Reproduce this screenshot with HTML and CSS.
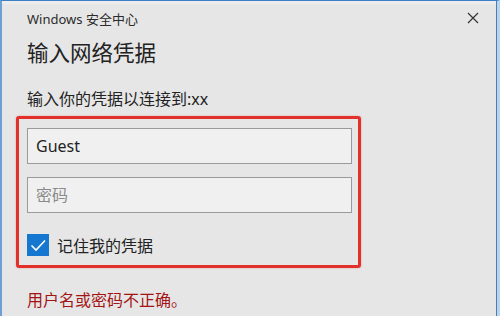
FILE: index.html
```html
<!DOCTYPE html>
<html lang="zh-CN">
<head>
    <meta charset="UTF-8">
    <title>Windows 安全中心</title>
    <link rel="stylesheet" href="styles.css">
</head>
<body>
<div class="dialog">
    <div class="titlebar">
        <span class="app-name">Windows 安全中心</span>
        <span class="close">
            <svg width="12" height="12" viewBox="0 0 12 12"><path d="M1 1 L11 11 M11 1 L1 11" stroke="#333" stroke-width="1.2" fill="none"/></svg>
        </span>
    </div>
    <h1>输入网络凭据</h1>
    <p class="prompt">输入你的凭据以连接到:xx</p>
    <div class="highlight">
        <div class="field">Guest</div>
        <div class="field placeholder">密码</div>
        <div class="remember">
            <span class="checkbox">
                <svg width="22" height="22" viewBox="0 0 22 22"><path d="M4.5 11.5 L9 16 L18 6.5" stroke="#fff" stroke-width="1.6" fill="none"/></svg>
            </span>
            <span>记住我的凭据</span>
        </div>
    </div>
    <p class="error">用户名或密码不正确。</p>
</div>
</body>
</html>
```

FILE: styles.css
```css
body {
    margin: 0;
    font-family: "Noto Sans", "Noto Sans CJK SC", sans-serif;
    background-color: #e6e6e6;
}
.dialog {
    width: 500px;
    height: 316px;
    box-sizing: border-box;
    background-color: #e6e6e6;
    border-top: 1px solid #3b7fc4;
    border-left: 2px solid #6c9fd3;
    border-right: 3px solid #b9d4ec;
    box-shadow: inset -1px 0 0 #4a7fb5, inset 0 3px 0 #ececec;
    padding-left: 25px;
    padding-right: 20px;
    overflow: hidden;
    color: #1f1f1f;
}
.titlebar {
    display: flex;
    justify-content: space-between;
    align-items: center;
    height: 34px;
}
.app-name {
    font-size: 13px;
    color: #2b2b2b;
}
.close {
    display: flex;
    margin-right: -2px;
}
h1 {
    margin: 4px 0 0;
    font-size: 21.5px;
    font-weight: normal;
    line-height: 28px;
    color: #222;
}
.prompt {
    margin: 22px 0 0;
    font-size: 16px;
    line-height: 20px;
    color: #222;
}
.highlight {
    margin: 7px 0 0 -11px;
    width: 345px;
    box-sizing: border-box;
    border: 3px solid #e2312b;
    border-radius: 3px;
    box-shadow: 0 0 2px rgba(226, 49, 43, 0.4);
    padding: 9px 6px 8px 8px;
}
.field {
    height: 36px;
    box-sizing: border-box;
    border: 1px solid #9a9a9a;
    background-color: #f0f0f0;
    padding-left: 8px;
    font-size: 16px;
    line-height: 34px;
    color: #1f1f1f;
}
.field + .field {
    margin-top: 13px;
}
.placeholder {
    color: #8a8a8a;
}
.remember {
    display: flex;
    align-items: center;
    gap: 8px;
    margin-top: 20px;
    font-size: 16px;
    color: #222;
}
.checkbox {
    display: flex;
    width: 22px;
    height: 22px;
    background-color: #1577d0;
}
.error {
    margin: 22px 0 0;
    font-size: 16px;
    line-height: 20px;
    color: #a31515;
}
```
